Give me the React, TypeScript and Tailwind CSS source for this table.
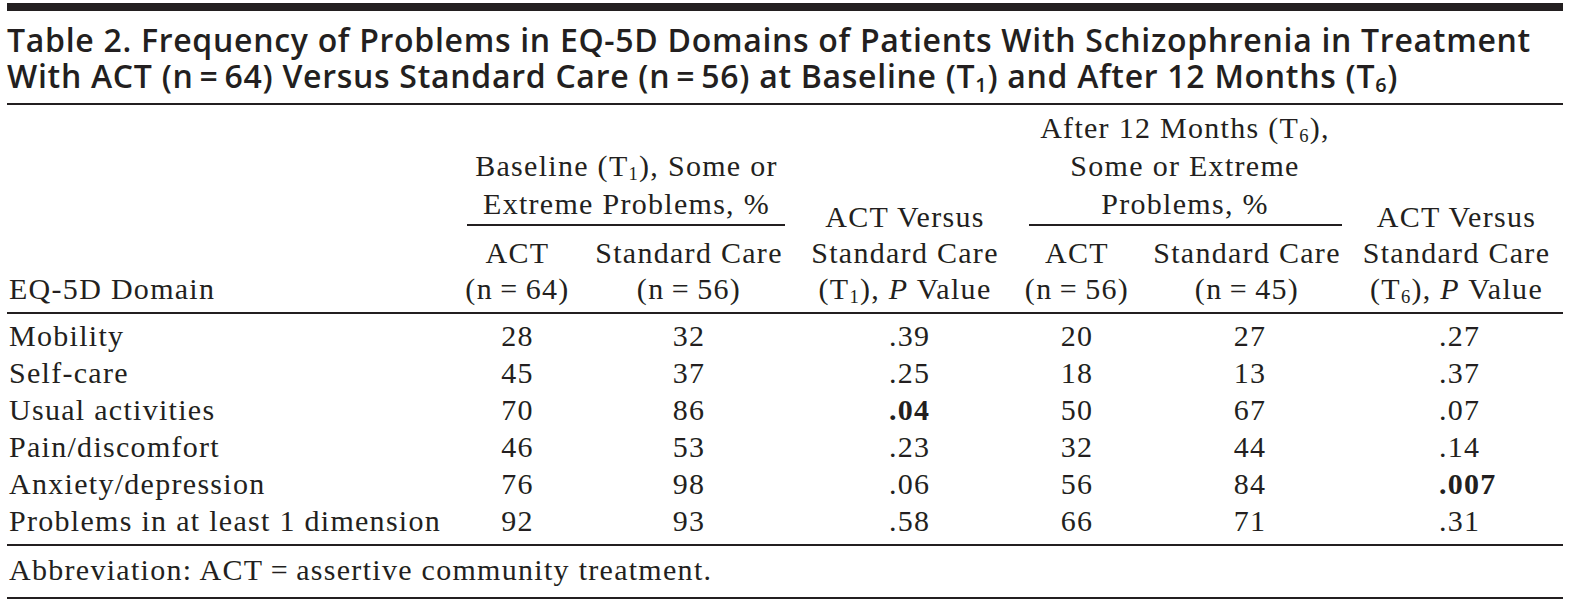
import React from 'react';

const rows: [string, string, string, string, string, string, string, number?][] = [
  ['Mobility', '28', '32', '.39', '20', '27', '.27'],
  ['Self-care', '45', '37', '.25', '18', '13', '.37'],
  ['Usual activities', '70', '86', '.04', '50', '67', '.07', 3],
  ['Pain/discomfort', '46', '53', '.23', '32', '44', '.14'],
  ['Anxiety/depression', '76', '98', '.06', '56', '84', '.007', 6],
  ['Problems in at least 1 dimension', '92', '93', '.58', '66', '71', '.31'],
];

const cols = 'grid grid-cols-[448px_125px_218px_214px_130px_210px_211px]';

function Sub({ children }: { children: React.ReactNode }) {
  return <span className="relative top-[0.22em] text-[0.62em] leading-none">{children}</span>;
}

export default function App() {
  return (
    <div className="bg-white min-h-screen pt-[3px] pl-[7px] text-[#231f20]">
      <div className="w-[1556px]">
        <div className="h-[8px] bg-[#231f20]" />
        <h1
          className="mt-[11px] mb-[9px] text-[32px] leading-[36px] font-semibold whitespace-nowrap tracking-[0.022em]"
          style={{ fontFamily: '"Open Sans", sans-serif' }}
        >
          Table 2. Frequency of Problems in EQ-5D Domains of Patients With Schizophrenia in Treatment
          <br />
          With ACT (n{'\u2009'}={'\u2009'}64) Versus Standard Care (n{'\u2009'}={'\u2009'}56) at Baseline (T<Sub>1</Sub>) and After 12 Months (T<Sub>6</Sub>)
        </h1>
        <div className="h-[2px] bg-[#231f20]" />

        <div className="text-[30px] tracking-[0.043em]" style={{ fontFamily: '"Liberation Serif", serif' }}>
          {/* header */}
          <div className={`${cols} grid-rows-[auto_auto] pt-[4px] pb-[5px] whitespace-nowrap`}>
            <div className="col-start-1 row-start-1 row-span-2 self-end pl-[2px] leading-[36px]">EQ-5D Domain</div>

            <div className="col-start-2 col-span-2 row-start-1 self-end text-center leading-[38px]">
              <div>Baseline (T<Sub>1</Sub>), Some or</div>
              <div>Extreme Problems, %</div>
              <div className="mt-[1px] ml-[12px] mr-[13px] h-[2px] bg-[#231f20]" />
            </div>

            <div className="col-start-4 row-start-1 row-span-2 self-end text-center leading-[36px]">
              <div>ACT Versus</div>
              <div>Standard Care</div>
              <div>(T<Sub>1</Sub>), <i>P</i> Value</div>
            </div>

            <div className="col-start-5 col-span-2 row-start-1 self-end text-center leading-[38px] pl-[6px]">
              <div>After 12 Months (T<Sub>6</Sub>),</div>
              <div>Some or Extreme</div>
              <div>Problems, %</div>
              <div className="mt-[1px] ml-[11px] mr-[10px] h-[2px] bg-[#231f20]" />
            </div>

            <div className="col-start-7 row-start-1 row-span-2 self-end text-center leading-[36px] pr-[2px]">
              <div>ACT Versus</div>
              <div>Standard Care</div>
              <div>(T<Sub>6</Sub>), <i>P</i> Value</div>
            </div>

            <div className="col-start-2 row-start-2 pt-[9px] text-center leading-[36px]">
              <div>ACT</div>
              <div>(n{'\u2009'}={'\u2009'}64)</div>
            </div>
            <div className="col-start-3 row-start-2 pt-[9px] text-center leading-[36px]">
              <div>Standard Care</div>
              <div>(n{'\u2009'}={'\u2009'}56)</div>
            </div>
            <div className="col-start-5 row-start-2 pt-[9px] text-center leading-[36px]">
              <div>ACT</div>
              <div>(n{'\u2009'}={'\u2009'}56)</div>
            </div>
            <div className="col-start-6 row-start-2 pt-[9px] text-center leading-[36px]">
              <div>Standard Care</div>
              <div>(n{'\u2009'}={'\u2009'}45)</div>
            </div>
          </div>
          <div className="h-[2px] bg-[#231f20]" />

          {/* body */}
          <div className="pt-[3px] pb-[5px]">
            {rows.map((r) => (
              <div key={r[0]} className={`${cols} leading-[37px] whitespace-nowrap`}>
                <div className="pl-[2px]">{r[0]}</div>
                <div className="text-center">{r[1]}</div>
                <div className="text-center">{r[2]}</div>
                <div className={`pl-[91px] ${r[7] === 3 ? 'font-bold' : ''}`}>{r[3]}</div>
                <div className="text-center">{r[4]}</div>
                <div className="text-center pl-[6px]">{r[5]}</div>
                <div className={`pl-[87px] ${r[7] === 6 ? 'font-bold' : ''}`}>{r[6]}</div>
              </div>
            ))}
          </div>
          <div className="h-[2px] bg-[#231f20]" />
          <div className="pl-[2px] pt-[7px] leading-[34px] mb-[10px]">Abbreviation: ACT{'\u2009'}={'\u2009'}assertive community treatment.</div>
          <div className="h-[2px] bg-[#231f20]" />
        </div>
      </div>
    </div>
  );
}
